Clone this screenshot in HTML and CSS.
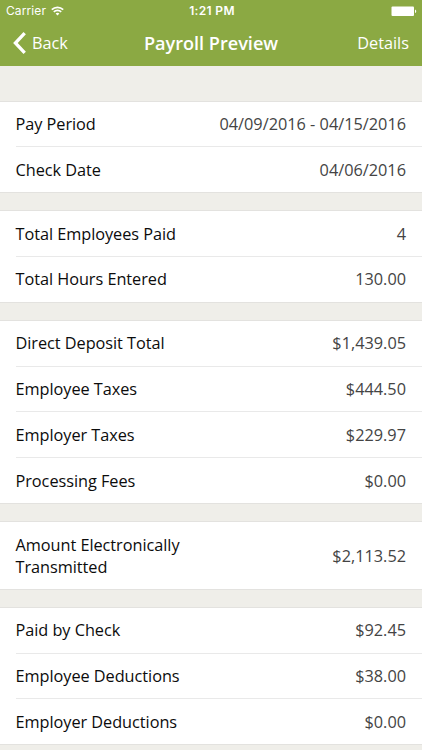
FILE: index.html
```html
<!DOCTYPE html>
<html lang="en">
<head>
<meta charset="utf-8">
<title>Payroll Preview</title>
<link rel="stylesheet" href="styles.css">
</head>
<body>
<header class="header">
  <div class="status">
    <div class="carrier">Carrier
      <svg class="wifi" width="13" height="10" viewBox="0 0 13 10" fill="none" stroke="#fff" stroke-width="1.7"><path d="M.8 3.7a8.2 8.2 0 0 1 11.4 0M2.8 5.9a5.3 5.3 0 0 1 7.4 0"/><path d="M6.5 9.5 4.6 7.6a2.7 2.7 0 0 1 3.8 0z" fill="#fff" stroke="none"/></svg>
    </div>
    <div class="time">1:21 PM</div>
    <div class="battery"><svg width="26" height="11" viewBox="0 0 26 11" fill="#fff"><rect x=".5" y=".5" width="22.5" height="9.5" rx="1"/><path d="M24 3.5c1.7.5 1.7 3.1 0 3.6z"/></svg></div>
  </div>
  <nav class="nav">
    <div class="back"><svg width="13" height="22" viewBox="0 0 13 22" fill="none" stroke="#fff" stroke-width="3.3"><path d="M11.7 1.2 2.4 11l9.3 9.8"/></svg><span>Back</span></div>
    <h1 class="title">Payroll Preview</h1>
    <div class="details">Details</div>
  </nav>
</header>
<main class="content">
  <section class="group">
    <div class="row"><span>Pay Period</span><span class="value">04/09/2016 - 04/15/2016</span></div>
    <div class="row"><span>Check Date</span><span class="value">04/06/2016</span></div>
  </section>
  <section class="group">
    <div class="row"><span>Total Employees Paid</span><span class="value">4</span></div>
    <div class="row"><span>Total Hours Entered</span><span class="value">130.00</span></div>
  </section>
  <section class="group">
    <div class="row"><span>Direct Deposit Total</span><span class="value">$1,439.05</span></div>
    <div class="row"><span>Employee Taxes</span><span class="value">$444.50</span></div>
    <div class="row"><span>Employer Taxes</span><span class="value">$229.97</span></div>
    <div class="row"><span>Processing Fees</span><span class="value">$0.00</span></div>
  </section>
  <section class="group">
    <div class="row tall"><span>Amount Electronically<br>Transmitted</span><span class="value">$2,113.52</span></div>
  </section>
  <section class="group">
    <div class="row"><span>Paid by Check</span><span class="value">$92.45</span></div>
    <div class="row"><span>Employee Deductions</span><span class="value">$38.00</span></div>
    <div class="row"><span>Employer Deductions</span><span class="value">$0.00</span></div>
  </section>
</main>
</body>
</html>
```
FILE: styles.css
```css
* { box-sizing: border-box; }
body {
  margin: 0;
  height: 750px;
  overflow: hidden;
  background: #efeee9;
  color: #0c0c0c;
  font: 16.3px/22px "Open Sans", "Noto Sans", sans-serif;
}
.header { height: 65.7px; background: #8ba943; color: #fff; }
.status {
  display: grid;
  grid-template-columns: 1fr auto 1fr;
  align-items: center;
  height: 22px;
  padding: 0 5px 0 6px;
  font: 12px/22px Inter, "Liberation Sans", sans-serif;
}
.carrier { display: flex; align-items: center; gap: 5px; letter-spacing: 0.1px; }
.time { padding-left: 1px; font-weight: 600; letter-spacing: 0.35px; }
.battery { display: flex; justify-content: flex-end; }
.nav {
  display: grid;
  grid-template-columns: 1fr auto 1fr;
  align-items: center;
  height: 42px;
  padding: 0 13px 0 13px;
}
.back { display: flex; align-items: center; gap: 6px; }
.title { margin: 0; font: 600 18.1px/24px "Open Sans", sans-serif; }
.details { text-align: right; }
.content { padding-top: 35px; }
.group {
  margin-bottom: 17px;
  padding-left: 15.5px;
  background: #fff;
  border-top: 1px solid #e3e2df;
  border-bottom: 1px solid #e3e2df;
}
.row {
  display: flex;
  align-items: center;
  justify-content: space-between;
  height: 44.75px;
  padding-right: 16px;
  letter-spacing: -0.04px;
}
.row + .row { height: 45.8px; border-top: 1px solid #e9e9e9; }
.row.tall { height: 67px; padding-top: 1px; }
.value { color: #444; letter-spacing: 0; }
```
